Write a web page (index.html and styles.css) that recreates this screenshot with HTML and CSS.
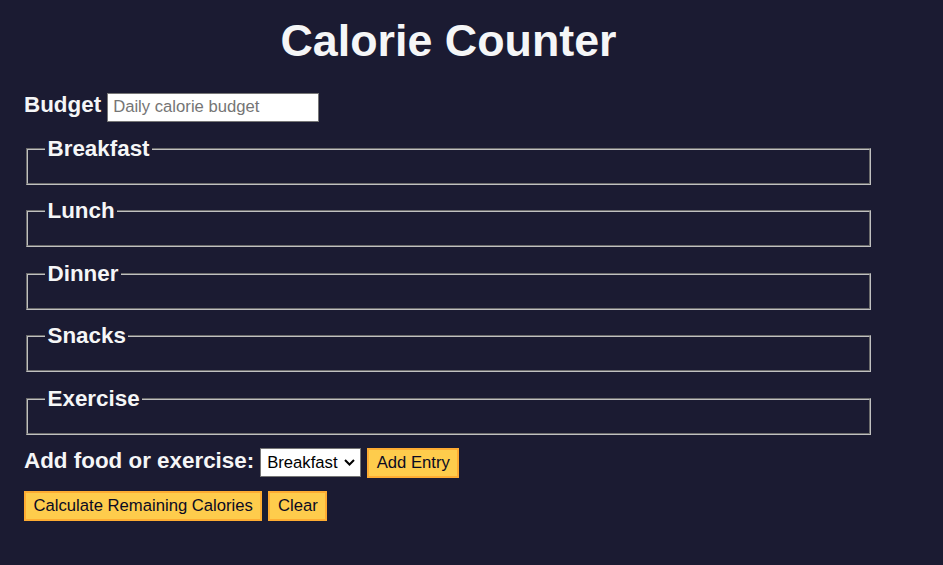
FILE: index.html
```html
<!DOCTYPE html>
<html lang="en">
<head>
<meta charset="utf-8">
<title>Calorie Counter</title>
<link rel="stylesheet" href="styles.css">
</head>
<body>
<main class="container">
  <h1 class="title">Calorie Counter</h1>
  <form class="counter-form">
    <div class="budget-row">
      <label class="label" for="budget">Budget</label>
      <input class="budget-input" id="budget" type="text" placeholder="Daily calorie budget">
    </div>
    <fieldset class="meal">
      <legend class="meal-legend">Breakfast</legend>
      <div class="meal-entries"></div>
    </fieldset>
    <fieldset class="meal">
      <legend class="meal-legend">Lunch</legend>
      <div class="meal-entries"></div>
    </fieldset>
    <fieldset class="meal">
      <legend class="meal-legend">Dinner</legend>
      <div class="meal-entries"></div>
    </fieldset>
    <fieldset class="meal">
      <legend class="meal-legend">Snacks</legend>
      <div class="meal-entries"></div>
    </fieldset>
    <fieldset class="meal">
      <legend class="meal-legend">Exercise</legend>
      <div class="meal-entries"></div>
    </fieldset>
    <div class="add-row">
      <label class="label" for="entry-dropdown">Add food or exercise:</label>
      <span class="select-wrap">
        <select class="entry-select" id="entry-dropdown">
          <option>Breakfast</option>
          <option>Lunch</option>
          <option>Dinner</option>
          <option>Snacks</option>
          <option>Exercise</option>
        </select>
        <svg class="select-chevron" width="11" height="7" viewBox="0 0 11 7" aria-hidden="true">
          <path d="M1 1 L5.5 5.5 L10 1" fill="none" stroke="#000000" stroke-width="2"/>
        </svg>
      </span>
      <button type="button" class="btn">Add Entry</button>
    </div>
    <div class="action-row">
      <button type="button" class="btn">Calculate Remaining Calories</button>
      <button type="button" class="btn">Clear</button>
    </div>
  </form>
</main>
</body>
</html>
```

FILE: styles.css
```css
html, body {
  margin: 0;
  padding: 0;
}

body {
  background-color: #1b1b32;
  color: #f5f6f7;
  font-family: "Liberation Sans", Arial, sans-serif;
  width: 943px;
  height: 565px;
  overflow: hidden;
}

.container {
  width: 849px;
  margin-left: 24px;
}

.title {
  margin: 15px 0 26px;
  font-size: 44.8px;
  font-weight: bold;
  text-align: center;
  line-height: normal;
}

.counter-form {
  margin: 0;
}

.label {
  font-size: 22.4px;
  font-weight: bold;
  line-height: normal;
}

.budget-row {
  display: flex;
  align-items: baseline;
  gap: 6px;
  margin-bottom: 14px;
}

.budget-input {
  box-sizing: border-box;
  width: 212px;
  height: 29px;
  margin: 0;
  padding: 0 5px;
  border: 1px solid #767676;
  border-radius: 0;
  background: #ffffff;
  color: #000000;
  font-family: "Liberation Sans", Arial, sans-serif;
  font-size: 16.67px;
}

.budget-input::placeholder {
  color: #757575;
}

.meal {
  margin: 0 2px 13.5px;
  padding: 8px 17px 13px;
  border: 2px groove #c0c0c0;
  min-width: 0;
}

.meal-legend {
  padding: 0 2.5px;
  font-size: 22.4px;
  font-weight: bold;
  line-height: normal;
}

.meal-entries {
  height: 0;
}

.add-row {
  display: flex;
  align-items: baseline;
  gap: 6px;
  margin-top: 0;
}

.select-wrap {
  position: relative;
  display: inline-flex;
}

.entry-select {
  box-sizing: border-box;
  width: 101px;
  height: 29px;
  margin: 0;
  padding: 0 22px 0 6px;
  border: 1px solid #767676;
  border-radius: 0;
  background-color: #ffffff;
  color: #000000;
  font-family: "Liberation Sans", Arial, sans-serif;
  font-size: 16.67px;
  -webkit-appearance: none;
  appearance: none;
}

.select-chevron {
  position: absolute;
  right: 6px;
  top: 11px;
  pointer-events: none;
}

.action-row {
  display: flex;
  gap: 6px;
  margin-top: 13px;
}

.btn {
  box-sizing: border-box;
  height: 30px;
  margin: 0;
  padding: 0 7.5px;
  border: 2px solid #feac32;
  border-radius: 0;
  background-color: #fecc4c;
  color: #0a0a23;
  font-family: "Liberation Sans", Arial, sans-serif;
  font-size: 16.67px;
  cursor: pointer;
}
```
